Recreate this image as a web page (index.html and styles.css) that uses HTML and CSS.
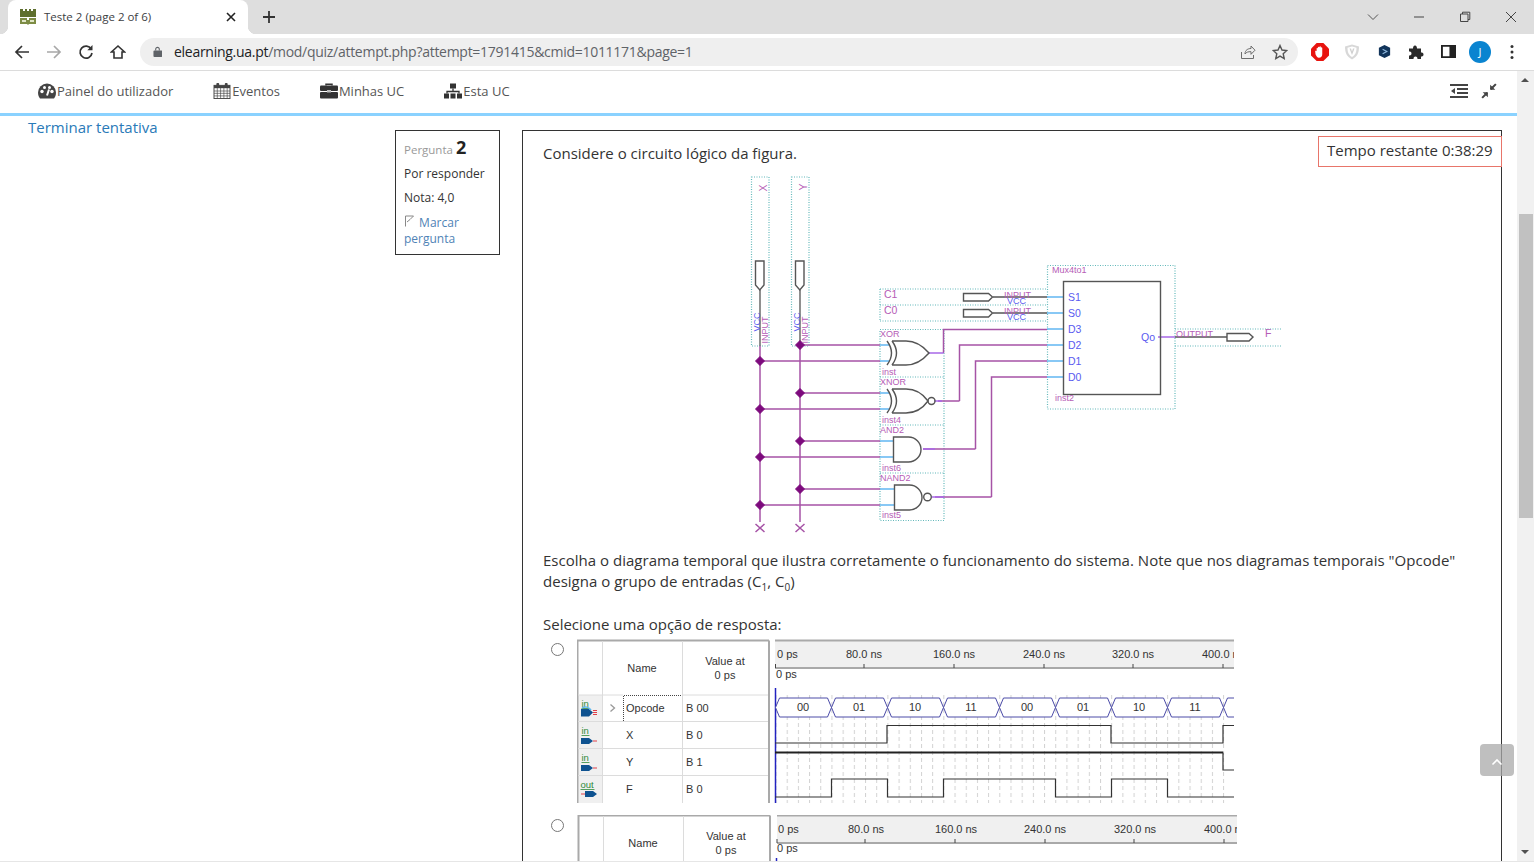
FILE: index.html
```html
<!DOCTYPE html>
<html lang="pt">
<head>
<meta charset="utf-8">
<title>Teste 2 (page 2 of 6)</title>
<link rel="stylesheet" href="styles.css">
</head>
<body>
<header class="tabstrip">
  <div class="tab">
    <svg class="favicon" viewBox="0 0 16 16"><path d="M0 0h3v2h2V0h2v2h2V0h2v2h2V0h3v8H0z" fill="#5f6f2e"/><path d="M0 9h7v2h2V9h7v6H9l-1 1-1-1H0z" fill="#7d8c45"/><path d="M2 11h4v2H2zM10 11h4v2h-4z" fill="#dfe5c6"/></svg>
    <span class="tab-title">Teste 2 (page 2 of 6)</span>
    <svg class="tab-close" viewBox="0 0 10 10"><path d="M1 1l8 8M9 1l-8 8" stroke="#222" stroke-width="1.6" fill="none"/></svg>
  </div>
  <svg class="newtab" viewBox="0 0 12 12"><path d="M6 0v12M0 6h12" stroke="#333" stroke-width="1.8" fill="none"/></svg>
  <div class="winctrls">
    <span class="winbtn"><svg viewBox="0 0 12 12"><path d="M1 3.5l5 5 5-5" stroke="#555" fill="none"/></svg></span>
    <span class="winbtn"><svg viewBox="0 0 12 12"><path d="M1 6h10" stroke="#444" fill="none"/></svg></span>
    <span class="winbtn"><svg viewBox="0 0 12 12"><path d="M1.5 3h7.5v7.5H1.5zM3.5 3V1.2h7.3v7.3H9" stroke="#444" fill="none"/></svg></span>
    <span class="winbtn"><svg viewBox="0 0 12 12"><path d="M1 1l10 10M11 1L1 11" stroke="#444" fill="none"/></svg></span>
  </div>
</header>

<div class="toolbar">
  <span class="tbtn"><svg viewBox="0 0 16 16"><path d="M15 8H2M8 2L2 8l6 6" stroke="#333" stroke-width="1.7" fill="none"/></svg></span>
  <span class="tbtn"><svg viewBox="0 0 16 16"><path d="M1 8h13M8 2l6 6-6 6" stroke="#a8a8a8" stroke-width="1.7" fill="none"/></svg></span>
  <span class="tbtn"><svg viewBox="0 0 16 16"><path d="M13.2 5A6 6 0 1 0 14 9" stroke="#333" stroke-width="1.7" fill="none"/><path d="M14.5 1v5.2H9.3z" fill="#333"/></svg></span>
  <span class="tbtn"><svg viewBox="0 0 16 16"><path d="M8 2L1.5 8H4v6h8V8h2.5z" stroke="#333" stroke-width="1.6" fill="none"/></svg></span>
  <div class="omnibox">
    <svg class="lock" viewBox="0 0 10 12"><path d="M3 5V3.4a2 2 0 0 1 4 0V5" stroke="#5f6368" stroke-width="1.2" fill="none"/><rect y="5" width="10" height="7" rx="1" x="0.5" fill="#5f6368"/></svg>
    <span class="url"><span class="url-host">elearning.ua.pt</span>/mod/quiz/attempt.php?attempt=1791415&amp;cmid=1011171&amp;page=1</span>
    <svg class="omni-ic share" viewBox="0 0 16 16"><path d="M1.5 8v6.5h12V11M5 10c0-4 3-5.500 6-5.500V2l4 4.200-4 4.100V7.700C8 7.700 6.500 8 5 10z" stroke="#6d6d6d" fill="none"/></svg>
    <svg class="omni-ic star" viewBox="0 0 16 16"><path d="M8 1.500l2 4.500 4.800.5-3.600 3.200 1 4.800L8 12.100 3.800 14.500l1-4.800L1.200 6.500 6 6z" stroke="#555" stroke-width="1.400" fill="none"/></svg>
  </div>
  <div class="extensions">
    <span class="tbtn"><svg class="ext-lg" viewBox="0 0 16 16"><path d="M5 0h6l5 5v6l-5 5H5l-5-5V5z" fill="#e8140f"/><path d="M5 5c0-1 1.200-1 1.200 0V4c0-1 1.300-1 1.300 0v-.400c0-1 1.300-1 1.300 0V4.500c0-1 1.200-1 1.200 0V10c0 2-1 3-3 3-1.500 0-2-1-3-3L3.800 8c-.4-1 .6-1.400 1.200-.6z" fill="#fff"/></svg></span>
    <span class="tbtn"><svg viewBox="0 0 16 16"><path d="M8 .5L15 2.500c0 6-1.500 10-7 13-5.500-3-7-7-7-13z" fill="#d8d8d8"/><path d="M8 2.500l4.500 1.200C12.500 8 11.500 11 8 13c-3.500-2-4.500-5-4.500-9.300z" fill="#fff"/><path d="M5.500 4.500L8 11l2.500-6.500H9L8 7.500 7 4.500z" fill="#d0d0d0"/></svg></span>
    <span class="tbtn"><svg class="ext-sm" viewBox="0 0 16 16"><path d="M8 1l6 3v8l-6 3-6-3V4z" fill="#12355b"/><path d="M6 5.500L10.500 8 6 10.500" stroke="#8fb8dd" stroke-width="1.200" fill="none"/></svg></span>
    <span class="tbtn"><svg viewBox="0 0 16 16"><path d="M1 4.500h4C5 3 5.500 1.500 7 1.500S9 3 9 4.500h4v4c1.500 0 2.500.5 2.500 2s-1 2-2.500 2V15H9.500c0-1.500-.5-2.500-2-2.500S5.500 13.500 5.500 15H1v-3.500c1.500 0 2.500-.5 2.500-2S2.500 7.500 1 7.500z" fill="#2a2a2a"/></svg></span>
    <span class="tbtn"><svg class="ext-sm2" viewBox="0 0 16 16"><path d="M1 2h14v12H1z" fill="none" stroke="#222" stroke-width="2"/><path d="M9 2h6v12H9z" fill="#222"/></svg></span>
    <span class="tbtn"><span class="avatar">J</span></span>
    <span class="tbtn"><svg viewBox="0 0 16 16"><circle cx="8" cy="2.500" r="1.500" fill="#333"/><circle cx="8" cy="8" r="1.500" fill="#333"/><circle cx="8" cy="13.500" r="1.500" fill="#333"/></svg></span>
  </div>
</div>

<div class="viewport">
  <div class="page">
    <nav class="topnav">
      <a class="navitem"><svg class="navic" viewBox="0 0 18 15"><path d="M9 0a9 9 0 0 0-9 9c0 2.500.8 4.500 2 6h14c1.200-1.500 2-3.500 2-6a9 9 0 0 0-9-9z" fill="#444"/><circle cx="4" cy="8" r="1.700" fill="#fff"/><circle cx="6.500" cy="4" r="1.500" fill="#fff"/><circle cx="11.500" cy="4" r="1.500" fill="#fff"/><circle cx="14" cy="8" r="1.700" fill="#fff"/><path d="M9 12l2-6" stroke="#fff" stroke-width="2"/></svg>Painel do utilizador</a>
      <a class="navitem"><svg class="navic" viewBox="0 0 18 17"><rect x=".5" y="2.500" width="17" height="14" fill="#fff" stroke="#444"/><rect x=".5" y="2.500" width="17" height="3" fill="#444"/><rect x="3" y="0" width="3" height="4.500" rx="1" fill="#444"/><rect x="12" y="0" width="3" height="4.500" rx="1" fill="#444"/><path d="M.5 8.500h17M.5 11h17M.5 13.700h17M4 5v11M7.500 5v11M11 5v11M14.500 5v11" stroke="#444" stroke-width=".7"/></svg>Eventos</a>
      <a class="navitem"><svg class="navic" viewBox="0 0 18 15"><path d="M6 2V.8h6V2" stroke="#333" stroke-width="1.500" fill="none"/><rect y="2" width="18" height="5.500" rx="1" fill="#333"/><rect y="8.500" width="18" height="6.500" rx="1" fill="#333"/><rect x="7" y="6.500" width="4" height="2.500" fill="#bbb"/></svg>Minhas UC</a>
      <a class="navitem"><svg class="navic" viewBox="0 0 18 15"><rect x="6" y="0" width="6" height="5" fill="#333"/><path d="M9 5v3M3 10V8h12v2" stroke="#333" stroke-width="1.300" fill="none"/><rect x="0" y="10" width="5" height="5" fill="#333"/><rect x="6.500" y="10" width="5" height="5" fill="#333"/><rect x="13" y="10" width="5" height="5" fill="#333"/></svg>Esta UC</a>
      <div class="nav-tools">
        <svg class="tool-ic" viewBox="0 0 18 14"><path d="M0 1h18M7 5h11M7 9h11M0 13h18" stroke="#444" stroke-width="2"/><path d="M5 4v6L1 7z" fill="#444"/></svg>
        <svg class="tool-ic small" viewBox="0 0 14 14"><path d="M13 1L8.500 5.500M1 13l4.500-4.500" stroke="#444" stroke-width="1.800"/><path d="M8 1.500v4.500h4.500zM6 12.500V8H1.500z" fill="#444"/></svg>
      </div>
    </nav>

    <main class="quiz">
      <aside class="side">
        <a class="finish">Terminar tentativa</a>
      </aside>
      <section class="qinfo">
        <div class="qno">Pergunta <strong>2</strong></div>
        <div class="qstate">Por responder</div>
        <div class="qgrade">Nota: 4,0</div>
        <a class="qflag"><svg class="flag" viewBox="0 0 10 12"><path d="M1.500 11.500V1h8L6 4.500 3 7" stroke="#888" fill="none"/></svg> Marcar pergunta</a>
      </section>
      <section class="qbody">
        <div class="timer">Tempo restante 0:38:29</div>
        <p class="lead">Considere o circuito lógico da figura.</p>

        <svg class="circuit" width="550" height="370" viewBox="740 170 550 370">
          <g class="dots">
            <path d="M751.500 177h17.500v169h-17.500zM791.500 177h17.500v169h-17.500z"/>
            <path d="M880 289h167M880 305h167M880 321h167M880 289v32"/>
            <path d="M880 329.500h64v191h-64zM880 377h64M880 425h64M880 473h64"/>
            <path d="M1047.500 265.500h127.500v143.500h-127.500z"/>
            <path d="M1175 329h107M1175 346h107"/>
          </g>
          <g class="wire-dark">
            <path d="M760 290v56M800 290v55M993 297h54M993 313h54M1175 337h52"/>
          </g>
          <g class="wire">
            <path d="M760 346v176M800 345v177"/>
            <path d="M800 345h80M760 361h120M800 393h80M760 409h120M800 441h80M760 457h120M800 489h80M760 505h120"/>
            <path d="M943.500 353v-23.500H1047M959.500 401v-56H1047M975.500 449v-88H1047M991.500 497V377H1047"/>
            <path d="M938 401h21.500M923 449h52.500M935 497h56.500"/>
            <path d="M755.500 524l9 8M764.500 524l-9 8M795.500 524l9 8M804.500 524l-9 8"/>
          </g>
          <g class="wire-out">
            <path d="M929 353h14.500M934 401h8M923 449h12M932 497h12M1158 337h17"/>
          </g>
          <g class="wire-blue">
            <path d="M880 345h9M880 361h9M880 393h9M880 409h9M880 441h13M880 457h13M880 489h14M880 505h14"/>
            <path d="M1047 297h16M1047 313h16M1047 329h16M1047 345h16M1047 361h16M1047 377h16"/>
          </g>
          <g class="junctions">
            <path d="M800 340.500l4.500 4.500-4.500 4.500-4.500-4.500zM760 356.500l4.500 4.500-4.500 4.500-4.500-4.500zM800 388.500l4.500 4.500-4.500 4.500-4.500-4.500zM760 404.500l4.500 4.500-4.500 4.500-4.500-4.500zM800 436.500l4.500 4.500-4.500 4.500-4.500-4.500zM760 452.500l4.500 4.500-4.500 4.500-4.500-4.500zM800 484.500l4.500 4.500-4.500 4.500-4.500-4.500zM760 500.500l4.500 4.500-4.500 4.500-4.500-4.500z"/>
          </g>
          <g class="gate">
            <path d="M755.500 261h8.500v24l-4.200 5-4.300-5zM795.500 261h8.500v24l-4.200 5-4.300-5z"/>
            <path d="M963.500 293.500h25l4 3.500-4 4h-25zM963.500 309.500h25l4 3.500-4 4h-25zM1227 333.500h22l4 3.500-4 4h-22z"/>
            <path d="M887 341q9 12 0 24M892 341q9 12 0 24M892 341h14c9 0 17 5 23 12-6 7-14 12-23 12h-14"/>
            <path d="M887 389q9 12 0 24M892 389q9 12 0 24M892 389h14c9 0 17 5 22 12-5 7-13 12-22 12h-14"/>
            <circle cx="931.500" cy="401" r="3.500"/>
            <path d="M893.500 437h15a12.500 12.500 0 0 1 0 25h-15z"/>
            <path d="M894.500 485h15a12.500 12.500 0 0 1 0 25h-15z"/>
            <circle cx="927.500" cy="497" r="3.800"/>
            <rect x="1063.500" y="281.500" width="97" height="113"/>
          </g>
          <g class="lbl-pink">
            <text class="lbl-lg" transform="translate(767 188) rotate(-90)" text-anchor="middle">X</text>
            <text class="lbl-lg" transform="translate(807 187) rotate(-90)" text-anchor="middle">Y</text>
            <text transform="translate(768 330) rotate(-90)" text-anchor="middle">INPUT</text>
            <text transform="translate(808 330) rotate(-90)" text-anchor="middle">INPUT</text>
            <text class="lbl-lg" x="884" y="298">C1</text><text class="lbl-lg" x="884" y="314">C0</text>
            <text x="880" y="337">XOR</text><text x="882" y="375">inst</text>
            <text x="880" y="385">XNOR</text><text x="882" y="423">inst4</text>
            <text x="880" y="433">AND2</text><text x="882" y="471">inst6</text>
            <text x="880" y="481">NAND2</text><text x="882" y="518">inst5</text>
            <text x="1004" y="298">INPUT</text><text x="1004" y="314">INPUT</text>
            <text x="1052" y="273">Mux4to1</text><text x="1055" y="401">inst2</text>
            <text x="1176" y="337">OUTPUT</text><text class="lbl-lg" x="1265" y="337">F</text>
          </g>
          <g class="lbl-blue">
            <text transform="translate(760 322) rotate(-90)" text-anchor="middle">VCC</text>
            <text transform="translate(800 322) rotate(-90)" text-anchor="middle">VCC</text>
            <text x="1007" y="304">VCC</text><text x="1007" y="320">VCC</text>
            <text class="lbl-lg" x="1068" y="300.500">S1</text><text class="lbl-lg" x="1068" y="316.500">S0</text>
            <text class="lbl-lg" x="1068" y="332.500">D3</text><text class="lbl-lg" x="1068" y="348.500">D2</text>
            <text class="lbl-lg" x="1068" y="364.500">D1</text><text class="lbl-lg" x="1068" y="380.500">D0</text>
            <text class="lbl-lg" x="1141" y="341">Qo</text>
          </g>
        </svg>

        <p class="prompt">Escolha o diagrama temporal que ilustra corretamente o funcionamento do sistema. Note que nos diagramas temporais "Opcode" designa o grupo de entradas (C<sub>1</sub>, C<sub>0</sub>)</p>
        <p class="choose">Selecione uma opção de resposta:</p>

        <div class="options">
          <label class="option">
            <span class="radio"></span>
            <svg class="wave" width="657" height="165" viewBox="577 639 657 165">
              <defs>
                <pattern id="grid" x="775.500" y="695" width="11.190" height="7" patternUnits="userSpaceOnUse"><path d="M.5 0v4" stroke="#d2d2d2"/></pattern>
              </defs>
              <rect class="w-gray" x="578" y="695" width="24" height="108"/>
              <rect class="w-gray" x="775" y="641" width="459" height="27"/>
              <path class="w-frame" d="M577.500 803V640.500H769M769 640.500V803M775 640.500h459M775 668h459"/>
              <path class="w-sep" d="M602.500 641v162M682.500 641v162M578 695h45M682 695h86M603 721.500h165M603 748.500h165M603 775.500h165M578 721.500h25M578 748.500h25M578 775.500h25"/>
              <path class="w-cell" d="M623.500 721V695.500h58"/>
              <path class="w-chev" d="M610.500 704.500l4 3.500-4 3.500"/>
              <rect x="775" y="695" width="459" height="108" fill="url(#grid)"/>
              <path class="w-marker" d="M775.500 688v115"/>
              <path class="w-tick" d="M864 664v4M954 664v4M1044 664v4M1133 664v4M1223 664v4M775.500 664v4"/>
              <path class="w-bus" d="M775.500 707.500l4-9.500h48l4 9.500-4 9.500h-48zM831.500 707.500l4-9.500h48l4 9.500-4 9.500h-48zM887.500 707.500l4-9.500h48l4 9.500-4 9.500h-48zM943.500 707.500l4-9.500h48l4 9.500-4 9.500h-48zM999.500 707.500l4-9.500h48l4 9.500-4 9.500h-48zM1055.500 707.500l4-9.500h48l4 9.500-4 9.500h-48zM1111.500 707.500l4-9.500h48l4 9.500-4 9.500h-48zM1167.500 707.500l4-9.500h48l4 9.500-4 9.500h-48zM1234 698h-6.500l-4 9.500 4 9.500h6.500"/>
              <path class="w-sig" d="M775 743h112v-17.500h224V743h112v-17.500h11"/>
              <path class="w-sig thick" d="M775 752.500h448"/>
              <path class="w-sig" d="M1223 752.500V770h11"/>
              <path class="w-sig" d="M775 797h56.500v-18h56v18h56v-18h112v18h56v-18h56v18h67"/>
              <g class="w-txt">
                <text x="642" y="672" text-anchor="middle">Name</text>
                <text x="725" y="665" text-anchor="middle">Value at</text>
                <text x="725" y="679" text-anchor="middle">0 ps</text>
                <text x="626" y="712">Opcode</text>
                <text x="626" y="739">X</text>
                <text x="626" y="766">Y</text>
                <text x="626" y="793">F</text>
                <text x="686" y="712">B 00</text>
                <text x="686" y="739">B 0</text>
                <text x="686" y="766">B 1</text>
                <text x="686" y="793">B 0</text>
                <text x="777" y="658">0 ps</text>
                <text x="864" y="658" text-anchor="middle">80.0 ns</text>
                <text x="954" y="658" text-anchor="middle">160.0 ns</text>
                <text x="1044" y="658" text-anchor="middle">240.0 ns</text>
                <text x="1133" y="658" text-anchor="middle">320.0 ns</text>
                <text x="1202" y="658">400.0 ns</text>
                <text x="776" y="678">0 ps</text>
                <text x="803" y="711" text-anchor="middle">00</text>
                <text x="859" y="711" text-anchor="middle">01</text>
                <text x="915" y="711" text-anchor="middle">10</text>
                <text x="971" y="711" text-anchor="middle">11</text>
                <text x="1027" y="711" text-anchor="middle">00</text>
                <text x="1083" y="711" text-anchor="middle">01</text>
                <text x="1139" y="711" text-anchor="middle">10</text>
                <text x="1195" y="711" text-anchor="middle">11</text>
              </g>
              <g class="w-io">
                <text class="w-in" x="581.500" y="707">in</text>
                <text class="w-in" x="581.500" y="734">in</text>
                <text class="w-in" x="581.500" y="761">in</text>
                <text class="w-in" x="580.500" y="788">out</text>
              </g>
              <path class="w-rule" d="M581.500 708.500h8M581.500 735.500h8M581.500 762.500h8M580.500 789.500h14"/>
              <path class="w-port" d="M581 709h8l4 3.500-4 4h-8zM581 738h8l4 3-4 3h-8zM581 765h8l4 3-4 3h-8zM585 791h8l4 3-4 3h-8z"/>
              <path class="w-pin" d="M593 710.500h4M593 712.500h4M593 714.500h4M593 741h4M593 768h4M581 794h4"/>
              <path class="w-swoosh" d="M582 708c3-2 7-1 9 2"/>
            </svg>
          </label>
          <label class="option second">
            <span class="radio"></span>
            <svg class="wave" width="660" height="47" viewBox="577 815 660 47">
              <rect class="w-gray" x="777" y="816" width="460" height="27"/>
              <path class="w-frame" d="M578.500 862V815.500H770M770 815.500V862M777 815.500h460M777 843h460"/>
              <path class="w-sep" d="M603.500 816v46M683.500 816v46"/>
              <path class="w-marker" d="M776.500 858v4"/>
              <path class="w-tick" d="M865 839v4M955 839v4M1045 839v4M1134 839v4M1224 839v4M777 839v4"/>
              <g class="w-txt">
                <text x="643" y="847" text-anchor="middle">Name</text>
                <text x="726" y="840" text-anchor="middle">Value at</text>
                <text x="726" y="854" text-anchor="middle">0 ps</text>
                <text x="778" y="833">0 ps</text>
                <text x="866" y="833" text-anchor="middle">80.0 ns</text>
                <text x="956" y="833" text-anchor="middle">160.0 ns</text>
                <text x="1045" y="833" text-anchor="middle">240.0 ns</text>
                <text x="1135" y="833" text-anchor="middle">320.0 ns</text>
                <text x="1204" y="833">400.0 ns</text>
                <text x="777" y="852">0 ps</text>
              </g>
            </svg>
          </label>
        </div>
      </section>
    </main>
    <a class="totop"><svg viewBox="0 0 12 8"><path d="M1.500 6.500L6 2l4.500 4.500" stroke="#fff" stroke-width="1.600" fill="none"/></svg></a>
  </div>
  <div class="scrollbar">
    <span class="arrow up"></span>
    <span class="thumb"></span>
    <span class="arrow down"></span>
  </div>
</div>
</body>
</html>
```

FILE: styles.css
```css
* { box-sizing: border-box; }
html, body { margin: 0; height: 100%; }
body {
  width: 1534px; height: 862px; overflow: hidden;
  display: flex; flex-direction: column;
  font-family: "Open Sans", "Noto Sans", sans-serif; color: #222; background: #fff;
}
svg { display: block; }

/* browser chrome */
.tabstrip { height: 34px; flex: none; display: flex; align-items: center; background: #dedede; }
.tab {
  position: relative; width: 240px; height: 34px; margin-left: 8px; background: #fff;
  border-radius: 8px 8px 0 0; display: flex; align-items: center; padding: 0 12px;
}
.tab::before, .tab::after { content: ""; position: absolute; bottom: 0; width: 8px; height: 8px; }
.tab::before { left: -8px; background: radial-gradient(circle at 0 0, #dedede 8px, #fff 8.500px); }
.tab::after { right: -8px; background: radial-gradient(circle at 100% 0, #dedede 8px, #fff 8.500px); }
.favicon { width: 16px; height: 16px; flex: none; }
.tab-title { margin: 0 0 2px 8px; font: 11.500px "Open Sans", sans-serif; color: #3c4043; flex: 1; white-space: nowrap; }
.tab-close { width: 10px; height: 10px; margin-right: 1px; position: relative; left: 1px; }
.newtab { width: 12px; height: 12px; margin-left: 15px; }
.winctrls { margin-left: auto; display: flex; }
.winbtn { width: 46px; height: 30px; display: flex; align-items: center; justify-content: center; }
.winbtn svg { width: 12px; height: 12px; }

.toolbar {
  height: 37px; flex: none; display: flex; align-items: center;
  padding: 0 6px 1px; background: #fff; border-bottom: 1px solid #dcdcdc;
}
.tbtn { width: 32px; height: 32px; flex: none; display: flex; align-items: center; justify-content: center; }
.tbtn svg { width: 16px; height: 16px; }
.tbtn svg.ext-lg { width: 18px; height: 18px; }
.tbtn svg.ext-sm { width: 15px; height: 15px; }
.tbtn svg.ext-sm2 { width: 15px; height: 15px; }
.omnibox {
  width: 1158px; height: 28px; margin-left: 6px; flex: none; display: flex; align-items: center;
  background: #efefef; border-radius: 14px; padding: 0 10px 0 13px;
}
.lock { width: 9px; height: 11px; }
.url { margin-left: 12px; font: 14px "Open Sans", sans-serif; color: #5f6368; letter-spacing: -0.28px; white-space: nowrap; flex: 1; }
.url-host { color: #202124; }
.omni-ic { width: 16px; height: 16px; }
.share { margin-right: 16px; }
.extensions { display: flex; margin-left: 6px; }
.avatar {
  width: 22px; height: 22px; border-radius: 50%; background: #0a84d0; color: #fff;
  font-size: 11px; display: flex; align-items: center; justify-content: center;
}

/* page */
.viewport { flex: 1; display: flex; min-height: 0; border-bottom: 1px solid #e6e6e6; }
.page { position: relative; flex: 1; min-width: 0; overflow: hidden; }
.topnav {
  height: 45px; display: flex; align-items: center; gap: 40px; padding: 0 20px 2px 38px;
  border-bottom: 3px solid #8ad2ff; font-size: 13px; color: #555;
}
.navitem { display: flex; align-items: center; color: #555; white-space: nowrap; }
.navic { width: 18px; height: 16px; margin-right: 1px; }
.nav-tools { margin-left: auto; display: flex; align-items: center; gap: 13px; }
.tool-ic { width: 18px; height: 14px; }
.tool-ic.small { width: 16px; height: 16px; }

.quiz { display: flex; align-items: flex-start; }
.side { width: 395px; flex: none; padding-left: 28px; }
.finish { font-size: 15px; line-height: 21px; color: #2a7ab8; }
.qinfo {
  width: 105px; height: 125px; flex: none; margin-top: 14px; padding: 4px 8px;
  border: 1px solid #333; font-size: 12px; color: #333;
}
.qno { color: #999; height: 27px; line-height: 24px; font-size: 11.500px; }
.qno strong { font-size: 18px; color: #222; }
.qstate, .qgrade { height: 24px; line-height: 24px; }
.qflag { display: block; margin-top: 5px; line-height: 16px; color: #4f83b6; }
.flag { display: inline; width: 10px; height: 12px; margin-right: 2px; }
.qbody {
  position: relative; width: 980px; height: 760px; margin-left: 22px; margin-top: 14px;
  padding: 11px 20px 0; border: 1px solid #333; border-bottom: 0; font-size: 15px;
}
.timer {
  position: absolute; top: 5px; right: -1px; width: 184px; height: 31px; padding-left: 8px;
  border: 1px solid #e8756a; background: #fff; font-size: 15px; line-height: 27px; color: #333;
}
.lead { margin: 0; line-height: 22px; height: 22px; color: #333; }
.circuit { margin: 6px 0 0 197px; }
.prompt { margin: 10px 0 0; line-height: 21px; color: #333; letter-spacing: 0.015px; }
.prompt sub { font-size: 10px; line-height: 0; }
.choose { margin: 21px 0 0; line-height: 22px; color: #333; }
.options { margin-top: 4px; }
.option { display: flex; align-items: flex-start; padding-left: 8px; }
.option.second { margin-top: 11px; }
.radio { width: 13px; height: 13px; flex: none; margin-top: 4px; border: 1px solid #777; border-radius: 50%; background: #fff; }
.wave { margin-left: 13px; flex: none; }

.totop {
  position: absolute; left: 1480px; top: 673px; width: 34px; height: 32px; border-radius: 4px;
  background: rgba(170,170,170,.75); display: flex; align-items: center; justify-content: center;
}
.totop svg { width: 12px; height: 8px; margin-top: 4px; }

.scrollbar { width: 17px; flex: none; position: relative; background: #f1f1f1; }
.thumb { position: absolute; left: 2px; right: 1px; top: 143px; height: 304px; background: #c1c1c1; }
.arrow { position: absolute; left: 4px; width: 0; height: 0; border-left: 4px solid transparent; border-right: 4px solid transparent; }
.arrow.up { top: 7px; border-bottom: 4px solid #505050; }
.arrow.down { bottom: 7px; border-top: 4px solid #505050; }

/* circuit drawing */
.dots path { fill: none; stroke: #62b8ba; stroke-width: 1.200; stroke-dasharray: 1 1.500; }
.wire path { fill: none; stroke: #a653a6; stroke-width: 1.500; }
.wire-dark path { fill: none; stroke: #555; stroke-width: 1.300; }
.wire-out path { fill: none; stroke: #a868e8; stroke-width: 1.500; }
.wire-blue path { fill: none; stroke: #62b6f2; stroke-width: 1.500; }
.junctions path { fill: #7d0a7d; stroke: #7d0a7d; stroke-width: 1; stroke-linejoin: round; }
.gate path, .gate circle, .gate rect { fill: none; stroke: #555; stroke-width: 1.400; }
.lbl-pink text { font: 9px "Liberation Sans", sans-serif; fill: #b65cb6; }
.lbl-blue text { font: 9px "Liberation Sans", sans-serif; fill: #5a5af0; }
.lbl-pink text.lbl-lg, .lbl-blue text.lbl-lg { font-size: 10.500px; }

/* waveform drawing */
.w-gray { fill: #f0f0f0; }
.w-frame { fill: none; stroke: #a9a9a9; stroke-width: 2; }
.w-sep { fill: none; stroke: #dcdcdc; stroke-width: 1; }
.w-cell { fill: none; stroke: #444; stroke-dasharray: 1 1; }
.w-chev { fill: none; stroke: #999; stroke-width: 1.300; }
.w-marker { fill: none; stroke: #2222c0; stroke-width: 1.500; }
.w-tick { fill: none; stroke: #444; }
.w-bus { fill: #fff; stroke: #4c4ca8; stroke-width: 1; }
.w-sig { fill: none; stroke: #333; stroke-width: 1.200; }
.w-sig.thick { stroke-width: 2; stroke: #222; }
.w-txt text { font: 11px "Liberation Sans", sans-serif; fill: #333; }
.w-in { font: 9.500px "Liberation Sans", sans-serif; fill: #2f8a3a; }
.w-rule { fill: none; stroke: #2f8a3a; stroke-width: .8; }
.w-port { fill: #0e5290; }
.w-pin { fill: none; stroke: #e0404a; }
.w-swoosh { fill: none; stroke: #5cb8f0; stroke-width: 1.500; }
```
